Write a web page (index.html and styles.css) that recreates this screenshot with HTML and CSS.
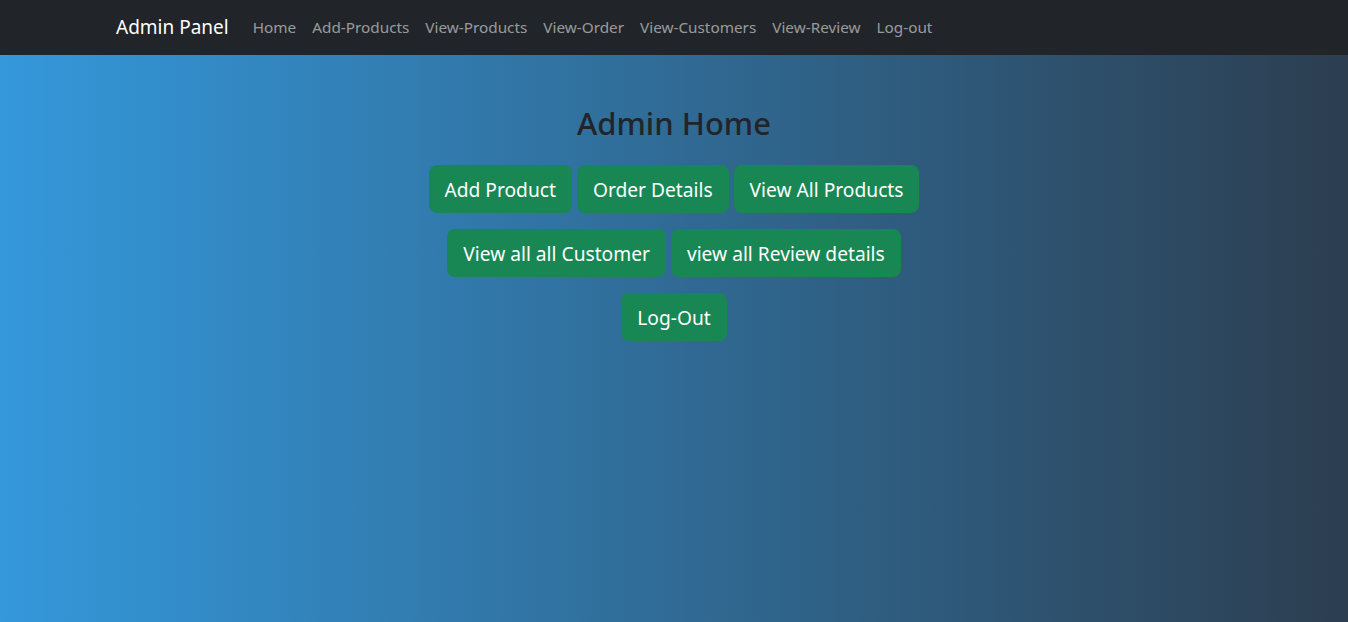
FILE: index.html
```html
<!DOCTYPE html>
<html lang="en">
<head>
<meta charset="utf-8">
<title>Admin Home</title>
<link rel="stylesheet" href="styles.css">
</head>
<body>
<nav class="navbar">
  <div class="nav-container">
    <a class="brand" href="#">Admin Panel</a>
    <ul class="nav-links">
      <li><a href="#">Home</a></li>
      <li><a href="#">Add-Products</a></li>
      <li><a href="#">View-Products</a></li>
      <li><a href="#">View-Order</a></li>
      <li><a href="#">View-Customers</a></li>
      <li><a href="#">View-Review</a></li>
      <li><a href="#">Log-out</a></li>
    </ul>
  </div>
</nav>
<main class="content">
  <h2 class="title">Admin Home</h2>
  <div class="btn-row">
    <a class="btn" href="#">Add Product</a>
    <a class="btn" href="#">Order Details</a>
    <a class="btn" href="#">View All Products</a>
  </div>
  <div class="btn-row">
    <a class="btn" href="#">View all all Customer</a>
    <a class="btn" href="#">view all Review details</a>
  </div>
  <div class="btn-row">
    <a class="btn" href="#">Log-Out</a>
  </div>
</main>
</body>
</html>
```

FILE: styles.css
```css
* { box-sizing: border-box; }
html, body { height: 100%; }
body {
  margin: 0;
  font-family: "Noto Sans", "Open Sans", sans-serif;
  background: linear-gradient(to right, #3498db, #2c3e50);
  color: #212529;
  min-height: 622px;
}
.navbar {
  background: #212529;
  height: 55px;
}
.nav-container {
  max-width: 1140px;
  margin: 0 auto;
  padding: 0 12px;
  height: 55px;
  display: flex;
  align-items: center;
}
.brand {
  color: #fff;
  text-decoration: none;
  font-size: 19px;
  margin-right: 16px;
  padding-bottom: 2px;
}
.nav-links {
  list-style: none;
  margin: 0;
  padding: 0;
  display: flex;
}
.nav-links a {
  display: block;
  padding: 8px;
  padding-bottom: 10px;
  color: rgba(255,255,255,0.55);
  text-decoration: none;
  font-size: 15.3px;
}
.content {
  text-align: center;
  padding-top: 49px;
}
.title {
  margin: 0 0 23px;
  font-size: 31px;
  font-weight: 500;
  line-height: 38px;
}
.btn-row {
  display: flex;
  justify-content: center;
  gap: 5px;
  margin-bottom: 16px;
}
.btn {
  display: inline-block;
  height: 48px;
  line-height: 50px;
  padding: 0 16px;
  background: #198754;
  color: #fff;
  border-radius: 8px;
  font-size: 19.2px;
  text-decoration: none;
}
```
